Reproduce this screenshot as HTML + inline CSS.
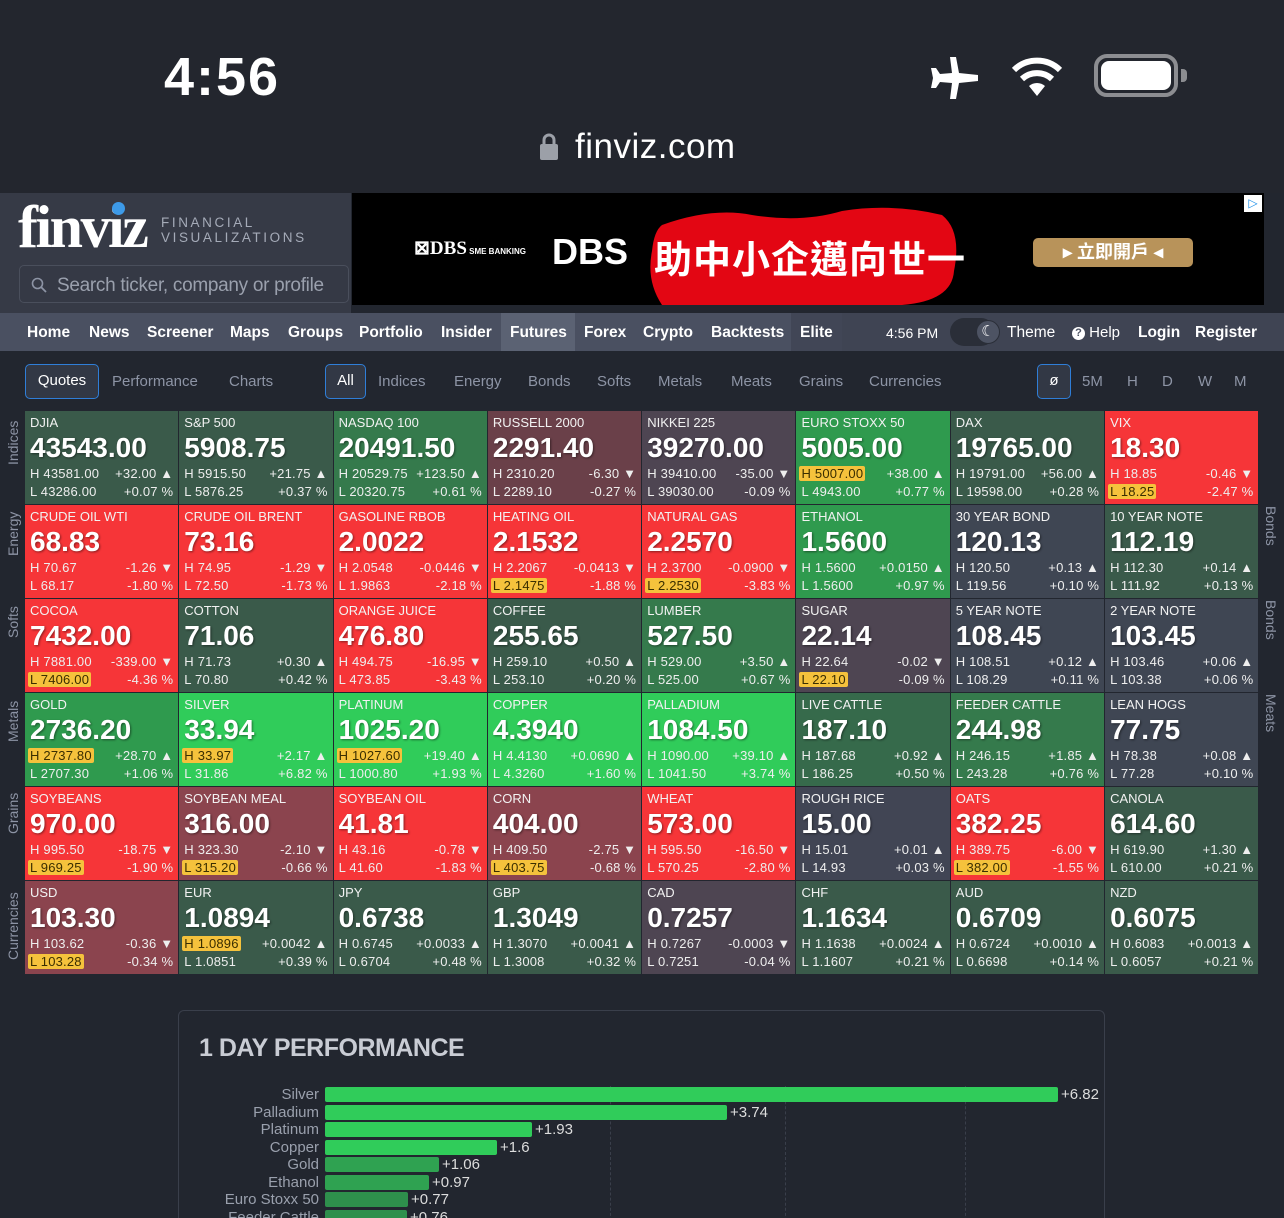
<!DOCTYPE html>
<html><head><meta charset="utf-8"><style>
*{box-sizing:border-box;margin:0;padding:0}
html,body{width:1284px;height:1218px;overflow:hidden}
body{background:#22262f;font-family:"Liberation Sans",sans-serif;color:#fff;position:relative}
.abs{position:absolute}
#status{left:0;top:0;width:1284px;height:193px;background:#23262e}
#hdr{left:0;top:193px;width:1284px;height:120px;background:#22262f}
#logo{left:0;top:193px;width:351px;height:120px;background:#363a46}
#ad{left:352px;top:193px;width:912px;height:112px;background:#000;overflow:hidden}
#nav{left:0;top:313px;width:1284px;height:38px;background:#4a5061;font-size:15.5px;font-weight:bold;color:#fff}
#nav span{position:absolute;top:11px}
.sub{position:absolute;top:373px;font-size:15px;color:#8d94a5}
.btn{position:absolute;top:364px;height:35px;border:1.5px solid #2f7ed8;border-radius:5px;background:#323845;color:#fff;font-size:15px;text-align:center;line-height:32px}
#grid{left:25px;top:411px;display:grid;grid-template-columns:repeat(8,153.3px);grid-template-rows:repeat(6,93px);gap:1px}
.t{position:relative;padding:4px 5px 0 5px;overflow:hidden}
.n{font-size:13px;line-height:15px;color:#f2f2f2}
.p{font-size:28px;font-weight:bold;line-height:32px;margin-top:2px;text-shadow:1px 1px 2px rgba(0,0,0,.45)}
.r{display:flex;justify-content:space-between;font-size:13px;line-height:17.5px;color:#eee;letter-spacing:.2px}
.r:nth-of-type(3){margin-top:1px}
.y{background:#f5c23c;color:#3a2e00;border-radius:2px;padding:0 2px;margin-left:-2px;font-weight:normal}
.R{background:#f63538}.R2{background:#8b444e}.Rn{background:#4e4552}.N{background:#414554}
.G0{background:#3a5a4a}.G1{background:#357a4c}.G2{background:#2f9a4e}.G3{background:#30cc5a}
.side{position:absolute;font-size:14px;color:#8d94a5;white-space:nowrap}
.l{transform:rotate(-90deg);transform-origin:left top;left:5px}
.rr{transform:rotate(90deg);transform-origin:left top;left:1279px}
#perf{left:178px;top:1010px;width:927px;height:260px;border:1.5px solid #3a3f4b;border-radius:6px;background:#22262f}
.bl{position:absolute;right:965px;font-size:15px;color:#9aa0ad;text-align:right}
.bar{position:absolute;left:325px;height:15px;border-radius:2px}
.bv{position:absolute;font-size:15px;color:#ddd}
</style></head><body>
<div id="status" class="abs">
<div class="abs" style="left:164px;top:46px;font-size:54px;font-weight:bold;color:#fff;letter-spacing:2px">4:56</div>
<svg class="abs" style="left:928px;top:55px" width="52" height="46" viewBox="0 0 52 46"><path d="M22 2 L28 2 L31 18 L50 20 L50 26 L31 28 L28 44 L22 44 L24 28 L12 27 L8 33 L3 33 L5 23 L3 13 L8 13 L12 19 L24 18 Z" fill="#fff"/></svg>
<svg class="abs" style="left:1010px;top:52px" width="54" height="46" viewBox="0 0 54 46"><path d="M27 44 L19 34 A12 12 0 0 1 35 34 Z" fill="#fff"/><path d="M12 27 A22 22 0 0 1 42 27" stroke="#fff" stroke-width="6" fill="none"/><path d="M4 18 A33 33 0 0 1 50 18" stroke="#fff" stroke-width="6" fill="none"/></svg>
<div class="abs" style="left:1094px;top:54px;width:84px;height:43px;border:4px solid #8c8d91;border-radius:13px"><div style="margin:3px;height:29px;background:#fff;border-radius:8px"></div></div>
<div class="abs" style="left:1181px;top:69px;width:6px;height:13px;background:#8c8d91;border-radius:0 4px 4px 0"></div>
<svg class="abs" style="left:539px;top:133px" width="20" height="28" viewBox="0 0 20 28"><rect x="1" y="11" width="18" height="16" rx="2" fill="#9ca0a8"/><path d="M5 12 V7 A5 5 0 0 1 15 7 V12" stroke="#9ca0a8" stroke-width="3" fill="none"/></svg>
<div class="abs" style="left:575px;top:127px;font-size:35px;color:#fff;letter-spacing:0.5px">finviz.com</div>
</div>
<div id="hdr" class="abs"></div>
<div id="logo" class="abs">
<div class="abs" style="left:18px;top:0px;font-family:'Liberation Serif',serif;font-weight:bold;font-size:60px;color:#fff;letter-spacing:-2.5px">finviz</div>
<div class="abs" style="left:112px;top:9px;width:13px;height:13px;border-radius:7px;background:#3d9ae8"></div>
<div class="abs" style="left:161px;top:22px;font-size:13.5px;color:#a5abb8;letter-spacing:2.6px;line-height:15px">FINANCIAL<br>VISUALIZATIONS</div>
<div class="abs" style="left:19px;top:72px;width:330px;height:38px;border:1.5px solid #4a4f5c;border-radius:5px;background:#353945"></div>
<svg class="abs" style="left:31px;top:84px" width="16" height="16" viewBox="0 0 16 16"><circle cx="6.5" cy="6.5" r="5" stroke="#8d94a5" stroke-width="1.6" fill="none"/><path d="M10 10 L15 15" stroke="#8d94a5" stroke-width="1.8"/></svg>
<div class="abs" style="left:57px;top:82px;font-size:19px;color:#9aa0ad;white-space:nowrap;width:280px;overflow:hidden;letter-spacing:-0.3px">Search ticker, company or profile</div>
</div>
<div id="ad" class="abs">
<div class="abs" style="left:62px;top:44px;font-family:'Liberation Serif',serif;font-size:19px;font-weight:bold;color:#fff">⊠DBS<span style="font-size:8px;font-family:'Liberation Sans'"> SME BANKING</span></div>
<div class="abs" style="left:200px;top:38px;font-size:36px;font-weight:bold;color:#fff">DBS</div>
<svg class="abs" style="left:290px;top:8px" width="330" height="104" viewBox="0 0 330 104"><path d="M20 24 Q70 6 110 14 Q160 22 200 10 Q250 2 300 14 Q320 30 312 70 Q310 100 260 104 L20 104 Q4 80 10 50 Q12 30 20 24 Z" fill="#e30613"/></svg>
<div class="abs" style="left:302px;top:36px;font-size:38px;font-weight:bold;color:#fff;font-family:'Liberation Sans','Noto Sans CJK TC',sans-serif;letter-spacing:1px">助中小企邁向世一</div>
<div class="abs" style="left:681px;top:45px;width:160px;height:29px;background:#b8935a;border-radius:5px;color:#fff;font-weight:bold;font-size:18px;line-height:29px;text-align:center;font-family:'Liberation Sans','Noto Sans CJK TC',sans-serif">▸ 立即開戶 ◂</div>
</div>
<div class="abs" style="left:1244px;top:195px;width:18px;height:17px;background:#fff;color:#1a8ee8;font-size:12px;text-align:center;line-height:17px">▷</div>
<div id="nav" class="abs">
<div class="abs" style="left:501px;top:0;width:74px;height:38px;background:#5b6273"></div>
<div class="abs" style="left:791px;top:0;width:51px;height:38px;background:#414656"></div>
<div class="abs" style="left:842px;top:0;width:442px;height:38px;background:#3f4453"></div>
<span style="left:27px">Home</span><span style="left:89px">News</span><span style="left:147px">Screener</span><span style="left:230px">Maps</span><span style="left:288px">Groups</span><span style="left:359px">Portfolio</span><span style="left:441px">Insider</span><span style="left:510px">Futures</span><span style="left:584px">Forex</span><span style="left:643px">Crypto</span><span style="left:711px">Backtests</span><span style="left:800px">Elite</span>
<span style="left:886px;font-weight:normal;font-size:14px;top:12px">4:56 PM</span>
<div class="abs" style="left:950px;top:5px;width:45px;height:28px;border-radius:14px;background:#2a2e38"></div>
<div class="abs" style="left:976px;top:7px;width:24px;height:24px;border-radius:12px;background:#4d5363;border:1.5px solid #2a2e38;color:#fff;font-size:15px;text-align:center;line-height:21px;font-weight:normal">☾</div>
<span style="left:1007px;font-weight:normal">Theme</span>
<span style="left:1072px;font-weight:normal;font-size:15px"><b style="display:inline-block;width:13px;height:13px;border-radius:7px;background:#fff;color:#4a5061;font-size:11px;text-align:center;line-height:13px;vertical-align:1px">?</b> Help</span>
<span style="left:1138px">Login</span><span style="left:1195px">Register</span>
</div>
<div class="btn" style="left:25px;width:74px">Quotes</div>
<span class="sub" style="left:112px">Performance</span><span class="sub" style="left:229px">Charts</span>
<div class="btn" style="left:325px;width:41px">All</div>
<span class="sub" style="left:378px">Indices</span><span class="sub" style="left:454px">Energy</span><span class="sub" style="left:528px">Bonds</span><span class="sub" style="left:597px">Softs</span><span class="sub" style="left:658px">Metals</span><span class="sub" style="left:731px">Meats</span><span class="sub" style="left:799px">Grains</span><span class="sub" style="left:869px">Currencies</span>
<div class="btn" style="left:1037px;width:34px">ø</div>
<span class="sub" style="left:1082px">5M</span><span class="sub" style="left:1127px">H</span><span class="sub" style="left:1162px">D</span><span class="sub" style="left:1198px">W</span><span class="sub" style="left:1234px">M</span>

<div class="side l" style="top:465px">Indices</div>
<div class="side l" style="top:556px">Energy</div>
<div class="side l" style="top:638px">Softs</div>
<div class="side l" style="top:742px">Metals</div>
<div class="side l" style="top:834px">Grains</div>
<div class="side l" style="top:960px">Currencies</div>
<div class="side rr" style="top:506px">Bonds</div>
<div class="side rr" style="top:600px">Bonds</div>
<div class="side rr" style="top:694px">Meats</div>

<div id="grid" class="abs">
<div class="t G0"><div class="n">DJIA</div><div class="p">43543.00</div><div class="r"><span>H 43581.00</span><span>+32.00 ▲</span></div><div class="r"><span>L 43286.00</span><span>+0.07 %</span></div></div>
<div class="t G0"><div class="n">S&amp;P 500</div><div class="p">5908.75</div><div class="r"><span>H 5915.50</span><span>+21.75 ▲</span></div><div class="r"><span>L 5876.25</span><span>+0.37 %</span></div></div>
<div class="t G1"><div class="n">NASDAQ 100</div><div class="p">20491.50</div><div class="r"><span>H 20529.75</span><span>+123.50 ▲</span></div><div class="r"><span>L 20320.75</span><span>+0.61 %</span></div></div>
<div class="t R2" style="background:#6a4049"><div class="n">RUSSELL 2000</div><div class="p">2291.40</div><div class="r"><span>H 2310.20</span><span>-6.30 ▼</span></div><div class="r"><span>L 2289.10</span><span>-0.27 %</span></div></div>
<div class="t Rn"><div class="n">NIKKEI 225</div><div class="p">39270.00</div><div class="r"><span>H 39410.00</span><span>-35.00 ▼</span></div><div class="r"><span>L 39030.00</span><span>-0.09 %</span></div></div>
<div class="t G2"><div class="n">EURO STOXX 50</div><div class="p">5005.00</div><div class="r"><span><b class="y">H 5007.00</b></span><span>+38.00 ▲</span></div><div class="r"><span>L 4943.00</span><span>+0.77 %</span></div></div>
<div class="t G0"><div class="n">DAX</div><div class="p">19765.00</div><div class="r"><span>H 19791.00</span><span>+56.00 ▲</span></div><div class="r"><span>L 19598.00</span><span>+0.28 %</span></div></div>
<div class="t R"><div class="n">VIX</div><div class="p">18.30</div><div class="r"><span>H 18.85</span><span>-0.46 ▼</span></div><div class="r"><span><b class="y">L 18.25</b></span><span>-2.47 %</span></div></div>

<div class="t R"><div class="n">CRUDE OIL WTI</div><div class="p">68.83</div><div class="r"><span>H 70.67</span><span>-1.26 ▼</span></div><div class="r"><span>L 68.17</span><span>-1.80 %</span></div></div>
<div class="t R"><div class="n">CRUDE OIL BRENT</div><div class="p">73.16</div><div class="r"><span>H 74.95</span><span>-1.29 ▼</span></div><div class="r"><span>L 72.50</span><span>-1.73 %</span></div></div>
<div class="t R"><div class="n">GASOLINE RBOB</div><div class="p">2.0022</div><div class="r"><span>H 2.0548</span><span>-0.0446 ▼</span></div><div class="r"><span>L 1.9863</span><span>-2.18 %</span></div></div>
<div class="t R"><div class="n">HEATING OIL</div><div class="p">2.1532</div><div class="r"><span>H 2.2067</span><span>-0.0413 ▼</span></div><div class="r"><span><b class="y">L 2.1475</b></span><span>-1.88 %</span></div></div>
<div class="t R"><div class="n">NATURAL GAS</div><div class="p">2.2570</div><div class="r"><span>H 2.3700</span><span>-0.0900 ▼</span></div><div class="r"><span><b class="y">L 2.2530</b></span><span>-3.83 %</span></div></div>
<div class="t G2"><div class="n">ETHANOL</div><div class="p">1.5600</div><div class="r"><span>H 1.5600</span><span>+0.0150 ▲</span></div><div class="r"><span>L 1.5600</span><span>+0.97 %</span></div></div>
<div class="t N" style="background:#3f4653"><div class="n">30 YEAR BOND</div><div class="p">120.13</div><div class="r"><span>H 120.50</span><span>+0.13 ▲</span></div><div class="r"><span>L 119.56</span><span>+0.10 %</span></div></div>
<div class="t G0"><div class="n">10 YEAR NOTE</div><div class="p">112.19</div><div class="r"><span>H 112.30</span><span>+0.14 ▲</span></div><div class="r"><span>L 111.92</span><span>+0.13 %</span></div></div>

<div class="t R"><div class="n">COCOA</div><div class="p">7432.00</div><div class="r"><span>H 7881.00</span><span>-339.00 ▼</span></div><div class="r"><span><b class="y">L 7406.00</b></span><span>-4.36 %</span></div></div>
<div class="t G0"><div class="n">COTTON</div><div class="p">71.06</div><div class="r"><span>H 71.73</span><span>+0.30 ▲</span></div><div class="r"><span>L 70.80</span><span>+0.42 %</span></div></div>
<div class="t R"><div class="n">ORANGE JUICE</div><div class="p">476.80</div><div class="r"><span>H 494.75</span><span>-16.95 ▼</span></div><div class="r"><span>L 473.85</span><span>-3.43 %</span></div></div>
<div class="t G0"><div class="n">COFFEE</div><div class="p">255.65</div><div class="r"><span>H 259.10</span><span>+0.50 ▲</span></div><div class="r"><span>L 253.10</span><span>+0.20 %</span></div></div>
<div class="t G1"><div class="n">LUMBER</div><div class="p">527.50</div><div class="r"><span>H 529.00</span><span>+3.50 ▲</span></div><div class="r"><span>L 525.00</span><span>+0.67 %</span></div></div>
<div class="t Rn"><div class="n">SUGAR</div><div class="p">22.14</div><div class="r"><span>H 22.64</span><span>-0.02 ▼</span></div><div class="r"><span><b class="y">L 22.10</b></span><span>-0.09 %</span></div></div>
<div class="t N" style="background:#3f4653"><div class="n">5 YEAR NOTE</div><div class="p">108.45</div><div class="r"><span>H 108.51</span><span>+0.12 ▲</span></div><div class="r"><span>L 108.29</span><span>+0.11 %</span></div></div>
<div class="t N" style="background:#3f4653"><div class="n">2 YEAR NOTE</div><div class="p">103.45</div><div class="r"><span>H 103.46</span><span>+0.06 ▲</span></div><div class="r"><span>L 103.38</span><span>+0.06 %</span></div></div>

<div class="t G2"><div class="n">GOLD</div><div class="p">2736.20</div><div class="r"><span><b class="y">H 2737.80</b></span><span>+28.70 ▲</span></div><div class="r"><span>L 2707.30</span><span>+1.06 %</span></div></div>
<div class="t G3"><div class="n">SILVER</div><div class="p">33.94</div><div class="r"><span><b class="y">H 33.97</b></span><span>+2.17 ▲</span></div><div class="r"><span>L 31.86</span><span>+6.82 %</span></div></div>
<div class="t G3"><div class="n">PLATINUM</div><div class="p">1025.20</div><div class="r"><span><b class="y">H 1027.60</b></span><span>+19.40 ▲</span></div><div class="r"><span>L 1000.80</span><span>+1.93 %</span></div></div>
<div class="t G3"><div class="n">COPPER</div><div class="p">4.3940</div><div class="r"><span>H 4.4130</span><span>+0.0690 ▲</span></div><div class="r"><span>L 4.3260</span><span>+1.60 %</span></div></div>
<div class="t G3"><div class="n">PALLADIUM</div><div class="p">1084.50</div><div class="r"><span>H 1090.00</span><span>+39.10 ▲</span></div><div class="r"><span>L 1041.50</span><span>+3.74 %</span></div></div>
<div class="t G0" style="background:#366a4b"><div class="n">LIVE CATTLE</div><div class="p">187.10</div><div class="r"><span>H 187.68</span><span>+0.92 ▲</span></div><div class="r"><span>L 186.25</span><span>+0.50 %</span></div></div>
<div class="t G1"><div class="n">FEEDER CATTLE</div><div class="p">244.98</div><div class="r"><span>H 246.15</span><span>+1.85 ▲</span></div><div class="r"><span>L 243.28</span><span>+0.76 %</span></div></div>
<div class="t N" style="background:#3f4653"><div class="n">LEAN HOGS</div><div class="p">77.75</div><div class="r"><span>H 78.38</span><span>+0.08 ▲</span></div><div class="r"><span>L 77.28</span><span>+0.10 %</span></div></div>

<div class="t R"><div class="n">SOYBEANS</div><div class="p">970.00</div><div class="r"><span>H 995.50</span><span>-18.75 ▼</span></div><div class="r"><span><b class="y">L 969.25</b></span><span>-1.90 %</span></div></div>
<div class="t R2"><div class="n">SOYBEAN MEAL</div><div class="p">316.00</div><div class="r"><span>H 323.30</span><span>-2.10 ▼</span></div><div class="r"><span><b class="y">L 315.20</b></span><span>-0.66 %</span></div></div>
<div class="t R"><div class="n">SOYBEAN OIL</div><div class="p">41.81</div><div class="r"><span>H 43.16</span><span>-0.78 ▼</span></div><div class="r"><span>L 41.60</span><span>-1.83 %</span></div></div>
<div class="t R2"><div class="n">CORN</div><div class="p">404.00</div><div class="r"><span>H 409.50</span><span>-2.75 ▼</span></div><div class="r"><span><b class="y">L 403.75</b></span><span>-0.68 %</span></div></div>
<div class="t R"><div class="n">WHEAT</div><div class="p">573.00</div><div class="r"><span>H 595.50</span><span>-16.50 ▼</span></div><div class="r"><span>L 570.25</span><span>-2.80 %</span></div></div>
<div class="t N"><div class="n">ROUGH RICE</div><div class="p">15.00</div><div class="r"><span>H 15.01</span><span>+0.01 ▲</span></div><div class="r"><span>L 14.93</span><span>+0.03 %</span></div></div>
<div class="t R"><div class="n">OATS</div><div class="p">382.25</div><div class="r"><span>H 389.75</span><span>-6.00 ▼</span></div><div class="r"><span><b class="y">L 382.00</b></span><span>-1.55 %</span></div></div>
<div class="t G0"><div class="n">CANOLA</div><div class="p">614.60</div><div class="r"><span>H 619.90</span><span>+1.30 ▲</span></div><div class="r"><span>L 610.00</span><span>+0.21 %</span></div></div>

<div class="t R2"><div class="n">USD</div><div class="p">103.30</div><div class="r"><span>H 103.62</span><span>-0.36 ▼</span></div><div class="r"><span><b class="y">L 103.28</b></span><span>-0.34 %</span></div></div>
<div class="t G0"><div class="n">EUR</div><div class="p">1.0894</div><div class="r"><span><b class="y">H 1.0896</b></span><span>+0.0042 ▲</span></div><div class="r"><span>L 1.0851</span><span>+0.39 %</span></div></div>
<div class="t G0"><div class="n">JPY</div><div class="p">0.6738</div><div class="r"><span>H 0.6745</span><span>+0.0033 ▲</span></div><div class="r"><span>L 0.6704</span><span>+0.48 %</span></div></div>
<div class="t G0"><div class="n">GBP</div><div class="p">1.3049</div><div class="r"><span>H 1.3070</span><span>+0.0041 ▲</span></div><div class="r"><span>L 1.3008</span><span>+0.32 %</span></div></div>
<div class="t Rn"><div class="n">CAD</div><div class="p">0.7257</div><div class="r"><span>H 0.7267</span><span>-0.0003 ▼</span></div><div class="r"><span>L 0.7251</span><span>-0.04 %</span></div></div>
<div class="t G0"><div class="n">CHF</div><div class="p">1.1634</div><div class="r"><span>H 1.1638</span><span>+0.0024 ▲</span></div><div class="r"><span>L 1.1607</span><span>+0.21 %</span></div></div>
<div class="t G0"><div class="n">AUD</div><div class="p">0.6709</div><div class="r"><span>H 0.6724</span><span>+0.0010 ▲</span></div><div class="r"><span>L 0.6698</span><span>+0.14 %</span></div></div>
<div class="t G0"><div class="n">NZD</div><div class="p">0.6075</div><div class="r"><span>H 0.6083</span><span>+0.0013 ▲</span></div><div class="r"><span>L 0.6057</span><span>+0.21 %</span></div></div>
</div>

<div id="perf" class="abs"></div>
<div class="abs" style="left:199px;top:1034px;font-size:25px;font-weight:bold;color:#c9ccd4;letter-spacing:-0.5px">1 DAY PERFORMANCE</div>
<div class="abs" style="left:610px;top:1086px;width:0;height:140px;border-left:1px dashed #3a3f4b"></div>
<div class="abs" style="left:785px;top:1086px;width:0;height:140px;border-left:1px dashed #3a3f4b"></div>
<div class="abs" style="left:965px;top:1086px;width:0;height:140px;border-left:1px dashed #3a3f4b"></div>

<div class="bl" style="top:1086px">Silver</div><div class="bar" style="top:1087px;width:733px;background:#30cc5a"></div><div class="bv" style="left:1061px;top:1086px">+6.82</div>
<div class="bl" style="top:1104px">Palladium</div><div class="bar" style="top:1105px;width:402px;background:#30cc5a"></div><div class="bv" style="left:730px;top:1104px">+3.74</div>
<div class="bl" style="top:1121px">Platinum</div><div class="bar" style="top:1122px;width:207px;background:#30cc5a"></div><div class="bv" style="left:535px;top:1121px">+1.93</div>
<div class="bl" style="top:1139px">Copper</div><div class="bar" style="top:1140px;width:172px;background:#30cc5a"></div><div class="bv" style="left:500px;top:1139px">+1.6</div>
<div class="bl" style="top:1156px">Gold</div><div class="bar" style="top:1157px;width:114px;background:#2fa251"></div><div class="bv" style="left:442px;top:1156px">+1.06</div>
<div class="bl" style="top:1174px">Ethanol</div><div class="bar" style="top:1175px;width:104px;background:#2fa251"></div><div class="bv" style="left:432px;top:1174px">+0.97</div>
<div class="bl" style="top:1191px">Euro Stoxx 50</div><div class="bar" style="top:1192px;width:83px;background:#2e8f4c"></div><div class="bv" style="left:411px;top:1191px">+0.77</div>
<div class="bl" style="top:1209px">Feeder Cattle</div><div class="bar" style="top:1210px;width:82px;background:#2e8f4c"></div><div class="bv" style="left:410px;top:1209px">+0.76</div>
</body></html>
